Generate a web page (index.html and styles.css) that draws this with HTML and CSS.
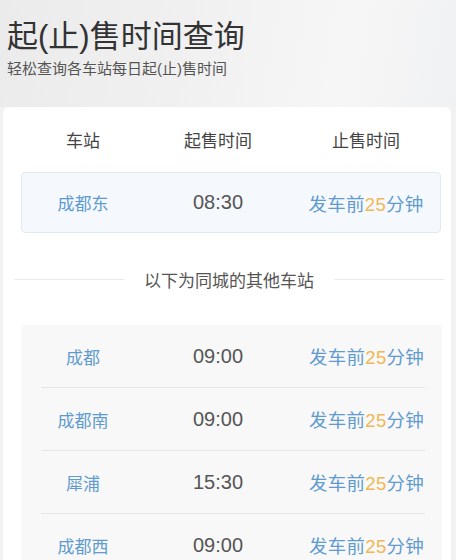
FILE: index.html
```html
<!DOCTYPE html>
<html lang="zh-CN">
<head>
<meta charset="utf-8">
<title>起(止)售时间查询</title>
<link rel="stylesheet" href="styles.css">
</head>
<body>
<header class="hero">
  <h1 class="title">起(止)售时间查询</h1>
  <p class="subtitle">轻松查询各车站每日起(止)售时间</p>
</header>
<main class="card">
  <div class="row head">
    <span>车站</span><span>起售时间</span><span>止售时间</span>
  </div>
  <div class="row current">
    <span class="station">成都东</span><span class="time">08:30</span><span class="stop">发车前<em>25</em>分钟</span>
  </div>
  <div class="sep"><span class="line"></span><span class="sep-text">以下为同城的其他车站</span><span class="line"></span></div>
  <div class="list">
    <div class="row item">
      <span class="station">成都</span><span class="time">09:00</span><span class="stop">发车前<em>25</em>分钟</span>
    </div>
    <div class="rule"></div>
    <div class="row item">
      <span class="station">成都南</span><span class="time">09:00</span><span class="stop">发车前<em>25</em>分钟</span>
    </div>
    <div class="rule"></div>
    <div class="row item">
      <span class="station">犀浦</span><span class="time">15:30</span><span class="stop">发车前<em>25</em>分钟</span>
    </div>
    <div class="rule"></div>
    <div class="row item">
      <span class="station">成都西</span><span class="time">09:00</span><span class="stop">发车前<em>25</em>分钟</span>
    </div>
  </div>
</main>
</body>
</html>
```

FILE: styles.css
```css
html, body {
  margin: 0;
  padding: 0;
}
body {
  width: 456px;
  height: 560px;
  overflow: hidden;
  background: #f2f2f2;
  font-family: "Liberation Sans", "Noto Sans CJK SC", sans-serif;
}
.hero {
  height: 107px;
  box-sizing: border-box;
  padding: 19px 0 0 7px;
  background: linear-gradient(100deg, #ebebeb 0%, #f0f0f0 40%, #f6f6f6 75%, #f0f1f3 100%);
}
.title {
  margin: 0;
  font-size: 31px;
  line-height: 36px;
  font-weight: 400;
  color: #333;
}
.subtitle {
  margin: 4px 0 0;
  font-size: 15px;
  line-height: 20px;
  color: #555;
}
.card {
  margin-left: 3px;
  width: 448px;
  height: 460px;
  box-sizing: border-box;
  padding: 0 10px 0 18px;
  background: #fff;
  border-radius: 6px 6px 0 0;
}
.row {
  display: grid;
  grid-template-columns: 122px 148px 1fr;
  align-items: center;
  text-align: center;
}
.head {
  height: 65px;
  padding: 0 1px;
  font-size: 17px;
  color: #444;
}
.current {
  height: 61px;
  box-sizing: border-box;
  background: #f5f9fd;
  border: 1px solid #e2e9f1;
  border-radius: 4px;
}
.station {
  font-size: 17px;
  color: #5f9bd0;
}
.time {
  font-size: 20px;
  color: #555;
}
.stop {
  font-size: 18.5px;
  color: #5f9bd0;
  letter-spacing: 0.3px;
}
.stop em {
  font-style: normal;
  color: #f1b752;
}
.sep {
  height: 92px;
  display: flex;
  align-items: center;
  margin-left: -7px;
  margin-right: -3px;
}
.line {
  flex: 1;
  height: 1px;
  background: #ebebeb;
}
.sep-text {
  padding: 0 20px;
  font-size: 17px;
  color: #555;
}
.list {
  background: #f8f8f8;
  border-radius: 4px;
  margin-right: -1px;
  padding: 0 1px;
}
.item {
  height: 62px;
}
.rule {
  height: 1px;
  margin: 0 16px 0 19px;
  background: #e6e6e6;
}
```
